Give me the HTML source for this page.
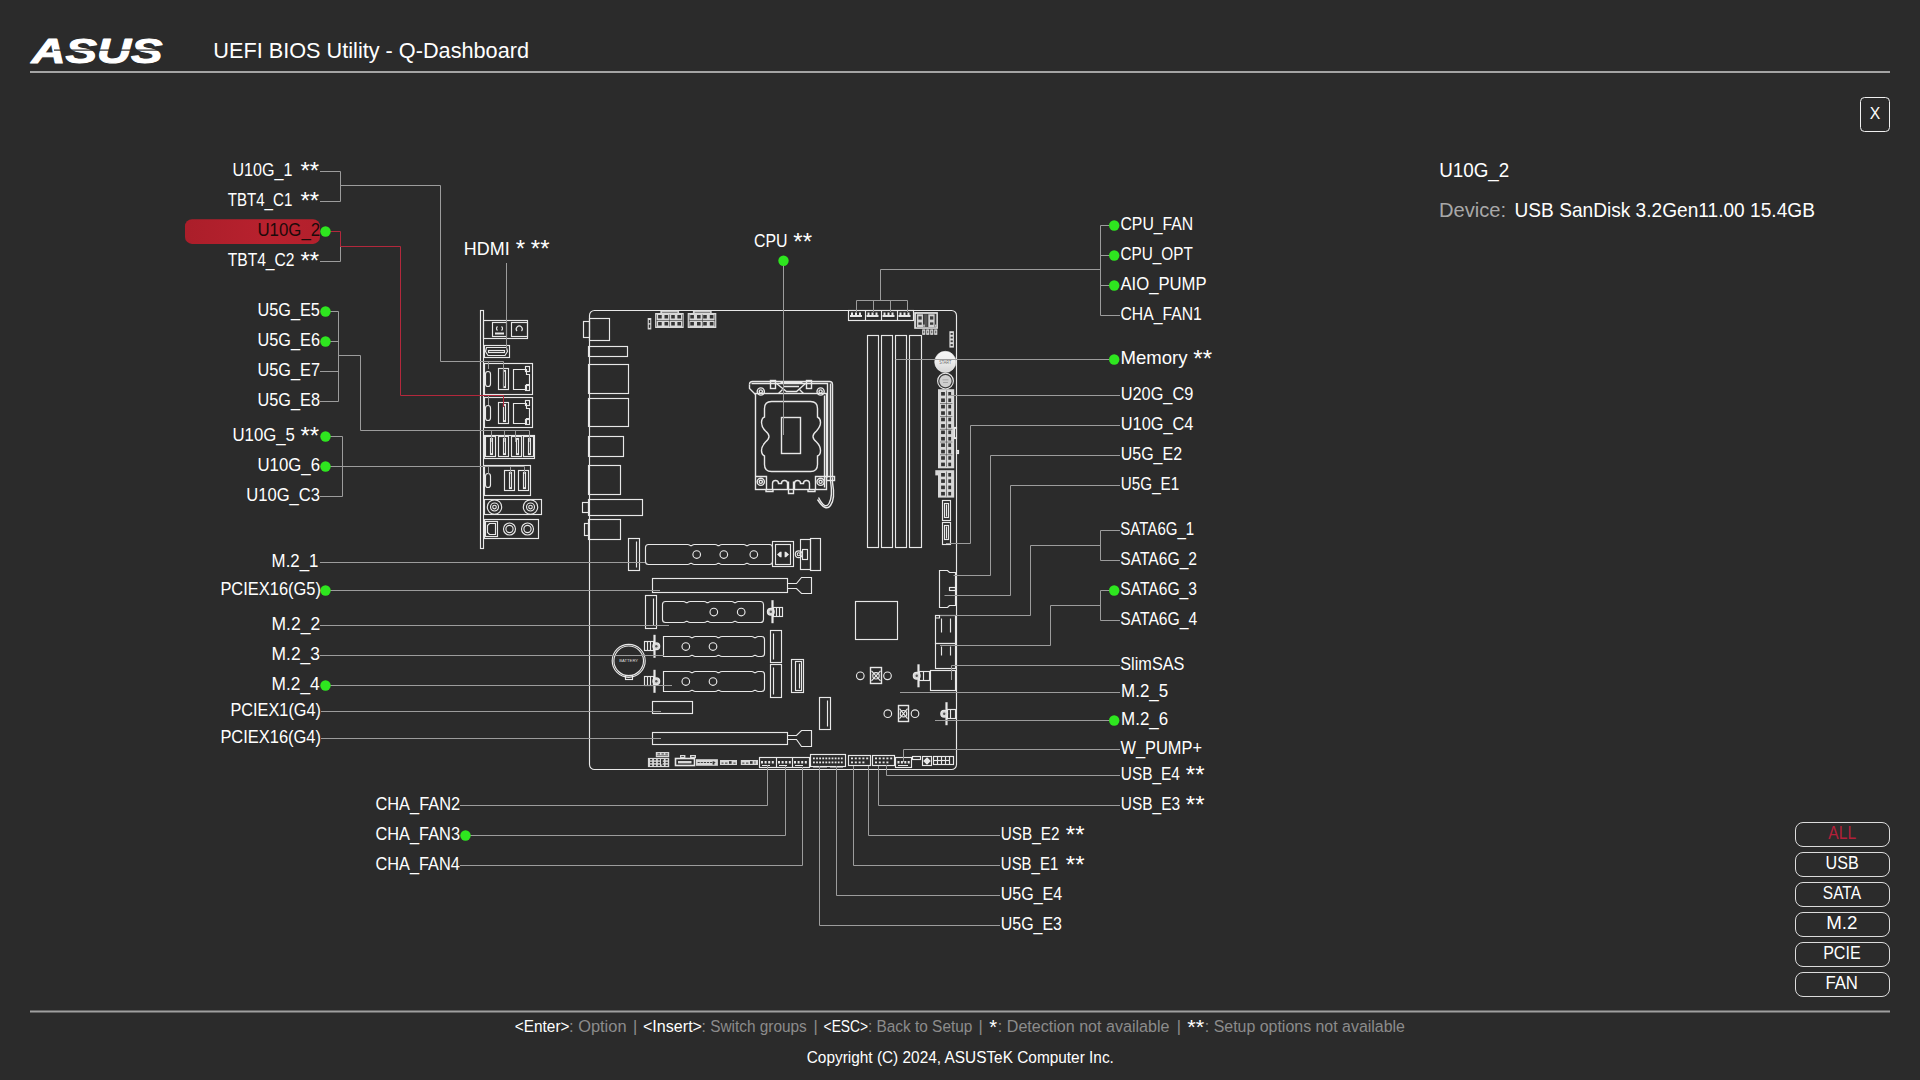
<!DOCTYPE html>
<html lang="en"><head><meta charset="utf-8"><title>UEFI BIOS Utility - Q-Dashboard</title>
<style>
html,body{margin:0;padding:0;background:#2b2b2b;overflow:hidden}
body{width:1920px;height:1080px}
svg{display:block;position:absolute;left:0;top:0}
text{font-family:"Liberation Sans", sans-serif;white-space:pre}
.o{fill:none;stroke:#e8e8e8;stroke-width:1.15}
.l{fill:none;stroke:#9c9c9c;stroke-width:1}
.r{fill:none;stroke:#b3283c;stroke-width:1}
.g{fill:#2ee61f;stroke:none}
</style></head><body>
<svg width="1920" height="1080" viewBox="0 0 1920 1080">
<rect x="0" y="0" width="1920" height="1080" fill="#2b2b2b"/>
<g id="header">
<text x="31.5" y="63" font-size="34.5" font-weight="bold" font-style="italic" fill="#fff" stroke="#fff" stroke-width="1" stroke-linejoin="round" textLength="131" lengthAdjust="spacingAndGlyphs">ASUS</text>
<rect x="54" y="49.5" width="109" height="1.2" fill="#2b2b2b" stroke="none"/>
<text x="213.33" y="57.8" font-size="21.6" text-anchor="start" fill="#fff" textLength="315.66" lengthAdjust="spacingAndGlyphs">UEFI BIOS Utility - Q-Dashboard</text>
<rect x="30" y="71" width="1860" height="2" fill="#a4a4a4" stroke="none"/>
</g>
<g id="footer">
<rect x="30" y="1010.5" width="1860" height="2" fill="#a0a0a0" stroke="none"/>
<text x="514.75" y="1032" font-size="16.3" text-anchor="start" fill="#fff" textLength="54.74" lengthAdjust="spacingAndGlyphs">&lt;Enter&gt;</text>
<text x="569" y="1032" font-size="16.3" text-anchor="start" fill="#8c8c8c" textLength="57.55" lengthAdjust="spacingAndGlyphs">: Option</text>
<text x="635" y="1032" font-size="16.3" text-anchor="middle" fill="#8c8c8c">|</text>
<text x="642.96" y="1032" font-size="16.3" text-anchor="start" fill="#fff" textLength="59.06" lengthAdjust="spacingAndGlyphs">&lt;Insert&gt;</text>
<text x="701.6" y="1032" font-size="16.3" text-anchor="start" fill="#8c8c8c" textLength="105.21" lengthAdjust="spacingAndGlyphs">: Switch groups</text>
<text x="815.5" y="1032" font-size="16.3" text-anchor="middle" fill="#8c8c8c">|</text>
<text x="823.57" y="1032" font-size="16.3" text-anchor="start" fill="#fff" textLength="44.59" lengthAdjust="spacingAndGlyphs">&lt;ESC&gt;</text>
<text x="867.9" y="1032" font-size="16.3" text-anchor="start" fill="#8c8c8c" textLength="104.48" lengthAdjust="spacingAndGlyphs">: Back to Setup</text>
<text x="980.5" y="1032" font-size="16.3" text-anchor="middle" fill="#8c8c8c">|</text>
<text x="997.84" y="1032" font-size="16.3" text-anchor="start" fill="#8c8c8c" textLength="171.63" lengthAdjust="spacingAndGlyphs">: Detection not available</text>
<text x="1178.8" y="1032" font-size="16.3" text-anchor="middle" fill="#8c8c8c">|</text>
<text x="1204.85" y="1032" font-size="16.3" text-anchor="start" fill="#8c8c8c" textLength="200.11" lengthAdjust="spacingAndGlyphs">: Setup options not available</text>
<text x="989.18" y="1033.9" font-size="20.2" text-anchor="start" fill="#fff">*</text>
<text x="1187.18" y="1033.9" font-size="20.2" text-anchor="start" fill="#fff" textLength="16.92" lengthAdjust="spacingAndGlyphs">**</text>
<text x="806.73" y="1062.5" font-size="16.3" text-anchor="start" fill="#fff" textLength="307.17" lengthAdjust="spacingAndGlyphs">Copyright (C) 2024, ASUSTeK Computer Inc.</text>
</g>
<g id="panel">
<rect x="1860.5" y="97.5" width="29" height="34" rx="4" fill="none" stroke="#f0f0f0" stroke-width="1"/>
<text x="1875" y="119" font-size="17" text-anchor="middle" fill="#fff" textLength="10.5" lengthAdjust="spacingAndGlyphs">X</text>
<text x="1439.15" y="177" font-size="20.3" text-anchor="start" fill="#fff" textLength="70.1" lengthAdjust="spacingAndGlyphs">U10G_2</text>
<text x="1438.95" y="217" font-size="20.3" text-anchor="start" fill="#a8a8a8" textLength="67.17" lengthAdjust="spacingAndGlyphs">Device:</text>
<text x="1514.53" y="217" font-size="20.3" text-anchor="start" fill="#fff" textLength="300.37" lengthAdjust="spacingAndGlyphs">USB SanDisk 3.2Gen11.00 15.4GB</text>
<rect x="1795.5" y="822.5" width="94" height="24" rx="7.5" fill="none" stroke="#dcdcdc" stroke-width="1"/>
<text x="1828.37" y="838.9" font-size="18.4" text-anchor="start" fill="#b3203a" textLength="27.75" lengthAdjust="spacingAndGlyphs">ALL</text>
<rect x="1795.5" y="852.5" width="94" height="24" rx="7.5" fill="none" stroke="#dcdcdc" stroke-width="1"/>
<text x="1825.56" y="868.9" font-size="18.4" text-anchor="start" fill="#fff" textLength="33.18" lengthAdjust="spacingAndGlyphs">USB</text>
<rect x="1795.5" y="882.5" width="94" height="24" rx="7.5" fill="none" stroke="#dcdcdc" stroke-width="1"/>
<text x="1822.8" y="898.9" font-size="18.4" text-anchor="start" fill="#fff" textLength="38.24" lengthAdjust="spacingAndGlyphs">SATA</text>
<rect x="1795.5" y="912.5" width="94" height="24" rx="7.5" fill="none" stroke="#dcdcdc" stroke-width="1"/>
<text x="1826.26" y="928.9" font-size="18.4" text-anchor="start" fill="#fff" textLength="31.28" lengthAdjust="spacingAndGlyphs">M.2</text>
<rect x="1795.5" y="942.5" width="94" height="24" rx="7.5" fill="none" stroke="#dcdcdc" stroke-width="1"/>
<text x="1823.19" y="958.9" font-size="18.4" text-anchor="start" fill="#fff" textLength="37.39" lengthAdjust="spacingAndGlyphs">PCIE</text>
<rect x="1795.5" y="972.5" width="94" height="24" rx="7.5" fill="none" stroke="#dcdcdc" stroke-width="1"/>
<text x="1825.43" y="988.9" font-size="18.4" text-anchor="start" fill="#fff" textLength="32.52" lengthAdjust="spacingAndGlyphs">FAN</text>
</g>
<g id="board" class="o">
<rect x="589.5" y="310.5" width="367" height="459" rx="5"/>
<rect x="480.5" y="310.5" width="3" height="238"/>
<rect x="483.5" y="320.5" width="44" height="18"/>
<rect x="492.5" y="322.5" width="14" height="14"/>
<rect x="511.5" y="322.5" width="16" height="14"/>
<path d="M497.5 330.5a2.5 2.5 0 0 1 0-4M501.5 326.5a2.5 2.5 0 0 1 0 4"/>
<rect x="495" y="332.5" width="9" height="2" fill="#e8e8e8" stroke="none"/>
<path d="M517 331a3 3 0 1 1 4.5 0"/>
<rect x="484.5" y="345.5" width="25" height="12"/>
<path d="M486.5 347.5H506.5L507.5 351.5L505 355.5H488L485.5 351.5Z"/>
<rect x="488.5" y="350.5" width="16" height="2"/>
<rect x="484.5" y="363.5" width="48" height="31"/>
<rect x="485.5" y="371.5" width="5" height="15" rx="2.5"/>
<rect x="498.5" y="368.5" width="10" height="21"/>
<rect x="503.5" y="370.5" width="2" height="17"/>
<path d="M513.5 369.5 H526.5 V374.5 H529.5 V384.5 H526.5 V389.5 H513.5 Z"/>
<rect x="525.5" y="366.5" width="4" height="5"/>
<rect x="525.5" y="385.5" width="4" height="5"/>
<rect x="484.5" y="397.5" width="48" height="30"/>
<rect x="485.5" y="405.5" width="5" height="15" rx="2.5"/>
<rect x="498.5" y="402.5" width="10" height="21"/>
<rect x="503.5" y="404.5" width="2" height="17"/>
<path d="M513.5 403.5 H526.5 V408.5 H529.5 V418.5 H526.5 V423.5 H513.5 Z"/>
<rect x="525.5" y="400.5" width="4" height="5"/>
<rect x="525.5" y="419.5" width="4" height="5"/>
<rect x="484.5" y="435.5" width="50" height="23"/>
<rect x="485.5" y="436.5" width="10" height="20"/>
<rect x="490.5" y="438.5" width="2" height="16"/>
<rect x="498.5" y="436.5" width="10" height="20"/>
<rect x="503.5" y="438.5" width="2" height="16"/>
<rect x="511.5" y="436.5" width="10" height="20"/>
<rect x="516.5" y="438.5" width="2" height="16"/>
<rect x="523.5" y="436.5" width="10" height="20"/>
<rect x="528.5" y="438.5" width="2" height="16"/>
<rect x="484.5" y="465.5" width="46" height="30"/>
<rect x="485.5" y="473.5" width="5" height="14" rx="2.5"/>
<rect x="504.5" y="470.5" width="10" height="20"/>
<rect x="509.5" y="472.5" width="2" height="16"/>
<rect x="518.5" y="470.5" width="10" height="20"/>
<rect x="523.5" y="472.5" width="2" height="16"/>
<rect x="484.5" y="499.5" width="57" height="15"/>
<circle cx="494.5" cy="507" r="7.2"/>
<circle cx="494.5" cy="507" r="4"/>
<circle cx="494.5" cy="507" r="1.8"/>
<circle cx="530.5" cy="507" r="7.2"/>
<circle cx="530.5" cy="507" r="4"/>
<circle cx="530.5" cy="507" r="1.8"/>
<rect x="484.5" y="519.5" width="54" height="19"/>
<rect x="485.5" y="521.5" width="12" height="15"/>
<path d="M487.5 525.5L489.5 523.5H495.5V534.5H489.5L487.5 532.5Z"/>
<circle cx="509.5" cy="529" r="6"/>
<circle cx="509.5" cy="529" r="3.6"/>
<circle cx="527.5" cy="529" r="6"/>
<circle cx="527.5" cy="529" r="3.6"/>
<rect x="589.5" y="318.5" width="20" height="22"/>
<rect x="583.5" y="321.5" width="6" height="16"/>
<rect x="588.5" y="346.5" width="39" height="10"/>
<rect x="588.5" y="364.5" width="40" height="29"/>
<rect x="588.5" y="398.5" width="40" height="28"/>
<rect x="588.5" y="436.5" width="35" height="20"/>
<rect x="588.5" y="465.5" width="32" height="29"/>
<rect x="588.5" y="499.5" width="54" height="16"/>
<rect x="582.5" y="502.5" width="6" height="10"/>
<rect x="588.5" y="519.5" width="32" height="20"/>
<rect x="584.5" y="523.5" width="4" height="12"/>
<rect x="647.7" y="318" width="3.6" height="11.5" fill="#d8d8d8" stroke="none"/>
<rect x="648.8" y="320" width="1.4" height="3.2" fill="#343434" stroke="none"/>
<rect x="648.8" y="324.6" width="1.4" height="3.2" fill="#343434" stroke="none"/>
<rect x="655.1" y="313" width="28.6" height="15" fill="#d8d8d8" stroke="none"/>
<rect x="660.3" y="310.8" width="18.8" height="2.2" fill="#d8d8d8" stroke="none"/>
<rect x="662.1" y="311.9" width="15.4" height="0.6" fill="#343434" stroke="none"/>
<rect x="658.1" y="315" width="3.6" height="3.5" fill="#343434" stroke="none"/>
<rect x="658.1" y="322" width="3.6" height="3.5" fill="#343434" stroke="none"/>
<rect x="664.5" y="315" width="3.6" height="3.5" fill="#343434" stroke="none"/>
<rect x="664.5" y="322" width="3.6" height="3.5" fill="#343434" stroke="none"/>
<rect x="671.2" y="315" width="3.6" height="3.5" fill="#343434" stroke="none"/>
<rect x="671.2" y="322" width="3.6" height="3.5" fill="#343434" stroke="none"/>
<rect x="677.4" y="315" width="3.6" height="3.5" fill="#343434" stroke="none"/>
<rect x="677.4" y="322" width="3.6" height="3.5" fill="#343434" stroke="none"/>
<rect x="656.3" y="320" width="26.2" height="0.6" fill="#343434" stroke="none"/>
<rect x="669.4" y="314.5" width="0.5" height="12" fill="#343434" stroke="none"/>
<rect x="656.3" y="314.5" width="0.5" height="12" fill="#343434" stroke="none"/>
<rect x="682" y="314.5" width="0.5" height="12" fill="#343434" stroke="none"/>
<rect x="687.7" y="313" width="28.6" height="15" fill="#d8d8d8" stroke="none"/>
<rect x="692.9" y="310.8" width="18.8" height="2.2" fill="#d8d8d8" stroke="none"/>
<rect x="694.7" y="311.9" width="15.4" height="0.6" fill="#343434" stroke="none"/>
<rect x="690.3" y="315" width="3.6" height="3.5" fill="#343434" stroke="none"/>
<rect x="690.3" y="322" width="3.6" height="3.5" fill="#343434" stroke="none"/>
<rect x="697" y="315" width="3.6" height="3.5" fill="#343434" stroke="none"/>
<rect x="697" y="322" width="3.6" height="3.5" fill="#343434" stroke="none"/>
<rect x="703.2" y="315" width="3.6" height="3.5" fill="#343434" stroke="none"/>
<rect x="703.2" y="322" width="3.6" height="3.5" fill="#343434" stroke="none"/>
<rect x="709.8" y="315" width="3.6" height="3.5" fill="#343434" stroke="none"/>
<rect x="709.8" y="322" width="3.6" height="3.5" fill="#343434" stroke="none"/>
<rect x="688.9" y="320" width="26.2" height="0.6" fill="#343434" stroke="none"/>
<rect x="702" y="314.5" width="0.5" height="12" fill="#343434" stroke="none"/>
<rect x="688.9" y="314.5" width="0.5" height="12" fill="#343434" stroke="none"/>
<rect x="714.6" y="314.5" width="0.5" height="12" fill="#343434" stroke="none"/>
<rect x="848.5" y="310.5" width="65" height="10"/>
<path d="M865.5 310.5V320.5"/>
<path d="M881.5 310.5V320.5"/>
<path d="M897.5 310.5V320.5"/>
<rect x="850" y="315" width="12" height="2" fill="#e8e8e8" stroke="none"/>
<rect x="851" y="312.5" width="2" height="2.5" fill="#e8e8e8" stroke="none"/>
<rect x="855" y="312.5" width="2" height="2.5" fill="#e8e8e8" stroke="none"/>
<rect x="859" y="312.5" width="2" height="2.5" fill="#e8e8e8" stroke="none"/>
<rect x="866.5" y="315" width="12" height="2" fill="#e8e8e8" stroke="none"/>
<rect x="867.5" y="312.5" width="2" height="2.5" fill="#e8e8e8" stroke="none"/>
<rect x="871.5" y="312.5" width="2" height="2.5" fill="#e8e8e8" stroke="none"/>
<rect x="875.5" y="312.5" width="2" height="2.5" fill="#e8e8e8" stroke="none"/>
<rect x="882.5" y="315" width="12" height="2" fill="#e8e8e8" stroke="none"/>
<rect x="883.5" y="312.5" width="2" height="2.5" fill="#e8e8e8" stroke="none"/>
<rect x="887.5" y="312.5" width="2" height="2.5" fill="#e8e8e8" stroke="none"/>
<rect x="891.5" y="312.5" width="2" height="2.5" fill="#e8e8e8" stroke="none"/>
<rect x="898.5" y="315" width="12" height="2" fill="#e8e8e8" stroke="none"/>
<rect x="899.5" y="312.5" width="2" height="2.5" fill="#e8e8e8" stroke="none"/>
<rect x="903.5" y="312.5" width="2" height="2.5" fill="#e8e8e8" stroke="none"/>
<rect x="907.5" y="312.5" width="2" height="2.5" fill="#e8e8e8" stroke="none"/>
<rect x="914.2" y="312.1" width="23.7" height="16.7" fill="#e6e6e6" stroke="none"/>
<rect x="915.9" y="313.8" width="20.5" height="13.5" fill="#3a3a3a" stroke="none"/>
<rect x="916.9" y="314.3" width="6.1" height="12.7" fill="#d2d2d2" stroke="none"/>
<rect x="928.3" y="314.3" width="6.3" height="12.7" fill="#d2d2d2" stroke="none"/>
<rect x="918.4" y="316.3" width="3.3" height="3.3" fill="#3e3e3e" stroke="none"/>
<rect x="918.4" y="322.4" width="3.3" height="2.4" fill="#3e3e3e" stroke="none"/>
<rect x="930" y="316.3" width="3.3" height="3.3" fill="#3e3e3e" stroke="none"/>
<rect x="930" y="322.4" width="3.3" height="2.4" fill="#3e3e3e" stroke="none"/>
<rect x="924.2" y="314.3" width="3.2" height="12.7" fill="#555" stroke="none"/>
<rect x="923.4" y="324.6" width="1.2" height="2.2" fill="#eee" stroke="none"/>
<rect x="935.2" y="324.6" width="1" height="2.2" fill="#eee" stroke="none"/>
<rect x="922.2" y="329.4" width="3.1" height="5.4" fill="#e2e2e2" stroke="none"/>
<rect x="923.2" y="330.6" width="1.1" height="2.8" fill="#555" stroke="none"/>
<rect x="926.2" y="329.4" width="3.1" height="5.4" fill="#e2e2e2" stroke="none"/>
<rect x="927.2" y="330.6" width="1.1" height="2.8" fill="#555" stroke="none"/>
<rect x="930.2" y="329.4" width="3.1" height="5.4" fill="#e2e2e2" stroke="none"/>
<rect x="931.2" y="330.6" width="1.1" height="2.8" fill="#555" stroke="none"/>
<rect x="934.2" y="329.4" width="3.1" height="5.4" fill="#e2e2e2" stroke="none"/>
<rect x="935.2" y="330.6" width="1.1" height="2.8" fill="#555" stroke="none"/>
<rect x="949.4" y="331.2" width="4.5" height="16.4" fill="#dcdcdc" stroke="none"/>
<rect x="950.6" y="333" width="2.2" height="1.8" fill="#3a3a3a" stroke="none"/>
<rect x="950.6" y="336.7" width="2.2" height="1.8" fill="#3a3a3a" stroke="none"/>
<rect x="950.6" y="340.4" width="2.2" height="1.8" fill="#3a3a3a" stroke="none"/>
<rect x="950.6" y="344.1" width="2.2" height="1.8" fill="#3a3a3a" stroke="none"/>
<rect x="867.5" y="335.5" width="11" height="212"/>
<rect x="881.5" y="335.5" width="11" height="212"/>
<rect x="895.5" y="335.5" width="11" height="212"/>
<rect x="909.5" y="335.5" width="12" height="212"/>
<defs><linearGradient id="gb" x1="0" y1="0" x2="0" y2="1"><stop offset="0" stop-color="#f6f6f6"/><stop offset="0.45" stop-color="#eeeeee"/><stop offset="1" stop-color="#d4d4d4"/></linearGradient></defs>
<circle cx="945.3" cy="361.9" r="10.6" fill="url(#gb)" stroke="#f0f0f0" stroke-width="0.6"/>
<text x="945.3" y="364.2" font-size="4.6" text-anchor="middle" fill="#666" stroke="none" textLength="12" lengthAdjust="spacingAndGlyphs">START</text>
<circle cx="945.5" cy="381.1" r="7.9" fill="#3a3a3a" stroke="#e8e8e8" stroke-width="1.1"/>
<circle cx="945.5" cy="381.1" r="6.1" fill="#cfcfcf" stroke="none"/>
<rect x="942.5" y="379.6" width="6" height="0.6" fill="#8a8a8a" stroke="none"/>
<rect x="943" y="382" width="5" height="0.6" fill="#8a8a8a" stroke="none"/>
<rect x="938" y="389.2" width="16.2" height="79.1" fill="#d8d8d8" stroke="none"/>
<rect x="941.1" y="392" width="3.8" height="3.6" fill="#343434" stroke="none"/>
<rect x="948.3" y="392" width="2.8" height="3.6" fill="#343434" stroke="none"/>
<rect x="941.1" y="398.42" width="3.8" height="3.6" fill="#343434" stroke="none"/>
<rect x="948.3" y="398.42" width="2.8" height="3.6" fill="#343434" stroke="none"/>
<rect x="941.1" y="404.84" width="3.8" height="3.6" fill="#343434" stroke="none"/>
<rect x="948.3" y="404.84" width="2.8" height="3.6" fill="#343434" stroke="none"/>
<rect x="941.1" y="411.26" width="3.8" height="3.6" fill="#343434" stroke="none"/>
<rect x="948.3" y="411.26" width="2.8" height="3.6" fill="#343434" stroke="none"/>
<rect x="941.1" y="417.68" width="3.8" height="3.6" fill="#343434" stroke="none"/>
<rect x="948.3" y="417.68" width="2.8" height="3.6" fill="#343434" stroke="none"/>
<rect x="941.1" y="424.1" width="3.8" height="3.6" fill="#343434" stroke="none"/>
<rect x="948.3" y="424.1" width="2.8" height="3.6" fill="#343434" stroke="none"/>
<rect x="941.1" y="430.52" width="3.8" height="3.6" fill="#343434" stroke="none"/>
<rect x="948.3" y="430.52" width="2.8" height="3.6" fill="#343434" stroke="none"/>
<rect x="941.1" y="436.94" width="3.8" height="3.6" fill="#343434" stroke="none"/>
<rect x="948.3" y="436.94" width="2.8" height="3.6" fill="#343434" stroke="none"/>
<rect x="941.1" y="443.36" width="3.8" height="3.6" fill="#343434" stroke="none"/>
<rect x="948.3" y="443.36" width="2.8" height="3.6" fill="#343434" stroke="none"/>
<rect x="941.1" y="449.78" width="3.8" height="3.6" fill="#343434" stroke="none"/>
<rect x="948.3" y="449.78" width="2.8" height="3.6" fill="#343434" stroke="none"/>
<rect x="941.1" y="456.2" width="3.8" height="3.6" fill="#343434" stroke="none"/>
<rect x="948.3" y="456.2" width="2.8" height="3.6" fill="#343434" stroke="none"/>
<rect x="941.1" y="462.62" width="3.8" height="3.6" fill="#343434" stroke="none"/>
<rect x="948.3" y="462.62" width="2.8" height="3.6" fill="#343434" stroke="none"/>
<rect x="940" y="403.24" width="12.4" height="0.5" fill="#343434" stroke="none"/>
<rect x="940" y="416.08" width="12.4" height="0.5" fill="#343434" stroke="none"/>
<rect x="940" y="428.92" width="12.4" height="0.5" fill="#343434" stroke="none"/>
<rect x="940" y="441.76" width="12.4" height="0.5" fill="#343434" stroke="none"/>
<rect x="940" y="454.6" width="12.4" height="0.5" fill="#343434" stroke="none"/>
<rect x="946.4" y="390.5" width="0.5" height="76.5" fill="#343434" stroke="none"/>
<rect x="938" y="470.2" width="16.2" height="27.4" fill="#d8d8d8" stroke="none"/>
<rect x="935.3" y="470.2" width="2.7" height="5.2" fill="#d8d8d8" stroke="none"/>
<rect x="941.1" y="473" width="3.8" height="3.6" fill="#343434" stroke="none"/>
<rect x="948.3" y="473" width="2.8" height="3.6" fill="#343434" stroke="none"/>
<rect x="941.1" y="479.3" width="3.8" height="3.6" fill="#343434" stroke="none"/>
<rect x="948.3" y="479.3" width="2.8" height="3.6" fill="#343434" stroke="none"/>
<rect x="941.1" y="485.6" width="3.8" height="3.6" fill="#343434" stroke="none"/>
<rect x="948.3" y="485.6" width="2.8" height="3.6" fill="#343434" stroke="none"/>
<rect x="941.1" y="491.9" width="3.8" height="3.6" fill="#343434" stroke="none"/>
<rect x="948.3" y="491.9" width="2.8" height="3.6" fill="#343434" stroke="none"/>
<rect x="946.4" y="471.5" width="0.5" height="25" fill="#343434" stroke="none"/>
<rect x="954.5" y="427.5" width="2" height="11"/>
<rect x="956.5" y="450.5" width="2" height="3"/>
<rect x="942.5" y="500.5" width="8" height="20"/>
<rect x="944.5" y="503.5" width="4" height="14"/>
<path d="M946.5 504.5V516.5"/>
<rect x="942.5" y="522.5" width="8" height="22"/>
<rect x="944.5" y="525.5" width="4" height="14"/>
<path d="M946.5 526.5V538.5"/>
<g stroke-width="1.4">
<path d="M749.5 384.5Q749.5 381.5 752.5 381.5H829.5Q832.5 381.5 832.5 384.5V477.5"/>
<path d="M751.5 383.5H827.5V477.5M749.5 384.5V388.5L755.5 394.5"/>
<rect x="755.5" y="393.5" width="71" height="96"/>
<path d="M824.5 395.5V487.5"/>
<path d="M771.5 401.5H810.5Q817.5 401.5 817.5 408.5V417Q820.5 418.5 820.5 422.5T816.5 431Q813 434 813 436.5T816.5 442Q820.5 446 820.5 450.5T817.5 456V464.5Q817.5 471.5 810.5 471.5H771.5Q764.5 471.5 764.5 464.5V456Q761.5 454.5 761.5 450.5T765.5 442Q769 439 769 436.5T765.5 431Q761.5 427 761.5 422.5T764.5 417V408.5Q764.5 401.5 771.5 401.5Z"/>
<rect x="781.5" y="417.5" width="19" height="36"/>
<circle cx="760.8" cy="391.5" r="3.6"/>
<circle cx="760.8" cy="391.5" r="1.6"/>
<circle cx="820.6" cy="391.5" r="3.6"/>
<circle cx="820.6" cy="391.5" r="1.6"/>
<circle cx="760.8" cy="481.8" r="3.6"/>
<circle cx="760.8" cy="481.8" r="1.6"/>
<circle cx="820.6" cy="481.8" r="3.6"/>
<circle cx="820.6" cy="481.8" r="1.6"/>
<rect x="770.5" y="380.5" width="5" height="8"/>
<rect x="806.5" y="380.5" width="5" height="8"/>
<path d="M776.5 383.5L786.5 391.5H796.5L805.5 383.5M780.5 382.5H802.5M783 386.5H799"/>
<path d="M778.5 393.5L782.5 389.5M803.5 393.5L799.5 389.5"/>
<path d="M772.5 489.5V483.5Q772.5 480.5 775.5 480.5T778.5 483.5H781.5Q781.5 480.5 784.5 480.5T787.5 483.5V489.5M794.5 489.5V483.5Q794.5 480.5 797.5 480.5T800.5 483.5H803.5Q803.5 480.5 806.5 480.5T809.5 483.5V489.5"/>
<path d="M788.5 481.5V493.5H793.5V481.5"/>
<path d="M766 489.5V491.5H773V489.5M808 489.5V491.5H815V489.5"/>
<path d="M830.5 383.5V480.5Q833 497 829 503.5T818.5 497.5"/>
<path d="M832.5 477.5V482.5Q835.5 499 830.5 505.5T817.5 499.5"/>
<rect x="826.5" y="476.5" width="8" height="4"/>
<path d="M755.5 476.5H766.5V489.5M826.5 476.5H815.5V489.5"/>
</g>
<rect x="628.5" y="538.5" width="11" height="32"/>
<path d="M636.5 541.5V567.5"/>
<path d="M648.5 544.5H687.5q1.5 0 2.5 0.9q1 0.5 2 0q1 -0.9 2.5 -0.9H715q1.5 0 2.5 0.9q1 0.5 2 0q1 -0.9 2.5 -0.9H743.5q1.5 0 2.5 0.9q1 0.5 2 0q1 -0.9 2.5 -0.9H769.5Q772.5 544.5 772.5 547.5V561.5Q772.5 564.5 769.5 564.5H750.5q-1.5 0 -2.5 -0.9q-1 -0.5 -2 0q-1 0.9 -2.5 0.9H722q-1.5 0 -2.5 -0.9q-1 -0.5 -2 0q-1 0.9 -2.5 0.9H694.5q-1.5 0 -2.5 -0.9q-1 -0.5 -2 0q-1 0.9 -2.5 0.9H648.5Q645.5 564.5 645.5 561.5V547.5Q645.5 544.5 648.5 544.5Z"/>
<circle cx="696.7" cy="554.5" r="3.8"/>
<circle cx="723.8" cy="554.5" r="3.8"/>
<circle cx="753.8" cy="554.5" r="3.8"/>
<rect x="772.5" y="541.5" width="21" height="25"/>
<rect x="775.5" y="544.5" width="15" height="20"/>
<path d="M777 554.5L780 551.8H781.6V557.2H780ZM789 554.5L786 551.8H784.6V557.2H786Z" fill="#e8e8e8" stroke="none"/>
<circle cx="798.7" cy="554.2" r="3.4"/>
<circle cx="798.7" cy="554.2" r="1.5"/>
<rect x="800.5" y="539.5" width="10" height="30"/>
<rect x="810.5" y="538.5" width="10" height="32"/>
<rect x="802.5" y="549.5" width="5" height="10"/>
<rect x="652.5" y="578.5" width="135" height="14"/>
<path d="M787.5 583.5H796.5L801.5 577.5H811.5V593.5H801.5L796.5 588.5H787.5"/>
<rect x="652.5" y="732.5" width="135" height="12"/>
<path d="M787.5 735.5H796.5L801.5 730.5H811.5V746.5H801.5L796.5 739.5H787.5"/>
<rect x="652.5" y="701.5" width="40" height="12"/>
<rect x="645.5" y="595.5" width="11" height="33"/>
<path d="M653.5 598.5V625.5"/>
<path d="M665.5 601.5H683.2q1.5 0 2.5 0.9q1 0.5 2 0q1 -0.9 2.5 -0.9H704q1.5 0 2.5 0.9q1 0.5 2 0q1 -0.9 2.5 -0.9H731.5q1.5 0 2.5 0.9q1 0.5 2 0q1 -0.9 2.5 -0.9H760.5Q763.5 601.5 763.5 604.5V619.5Q763.5 622.5 760.5 622.5H738.5q-1.5 0 -2.5 -0.9q-1 -0.5 -2 0q-1 0.9 -2.5 0.9H711q-1.5 0 -2.5 -0.9q-1 -0.5 -2 0q-1 0.9 -2.5 0.9H690.2q-1.5 0 -2.5 -0.9q-1 -0.5 -2 0q-1 0.9 -2.5 0.9H665.5Q662.5 622.5 662.5 619.5V604.5Q662.5 601.5 665.5 601.5Z"/>
<circle cx="713.8" cy="612" r="3.8"/>
<circle cx="741.2" cy="612" r="3.8"/>
<path d="M772.5 600.2V623.2" stroke-width="2.2"/>
<circle cx="770.8" cy="611.7" r="3.4" fill="#d6d6d6"/>
<circle cx="770.8" cy="611.7" r="1.2" fill="#555" stroke="none"/>
<rect x="773.5" y="607.5" width="9" height="9"/>
<path d="M776.5 607.5V616.5M779.5 607.5V616.5"/>
<path d="M663.5 636.5H688.5q1.5 0 2.5 0.9q1 0.5 2 0q1 -0.9 2.5 -0.9H715q1.5 0 2.5 0.9q1 0.5 2 0q1 -0.9 2.5 -0.9H751.5q1.5 0 2.5 0.9q1 0.5 2 0q1 -0.9 2.5 -0.9H761.5Q764.5 636.5 764.5 639.5V653.5Q764.5 656.5 761.5 656.5H758.5q-1.5 0 -2.5 -0.9q-1 -0.5 -2 0q-1 0.9 -2.5 0.9H722q-1.5 0 -2.5 -0.9q-1 -0.5 -2 0q-1 0.9 -2.5 0.9H695.5q-1.5 0 -2.5 -0.9q-1 -0.5 -2 0q-1 0.9 -2.5 0.9H663.5Z"/>
<circle cx="685.8" cy="646.5" r="3.8"/>
<circle cx="713" cy="646.5" r="3.8"/>
<path d="M663.5 671.5H688.5q1.5 0 2.5 0.9q1 0.5 2 0q1 -0.9 2.5 -0.9H715q1.5 0 2.5 0.9q1 0.5 2 0q1 -0.9 2.5 -0.9H751.5q1.5 0 2.5 0.9q1 0.5 2 0q1 -0.9 2.5 -0.9H761.5Q764.5 671.5 764.5 674.5V688.5Q764.5 691.5 761.5 691.5H758.5q-1.5 0 -2.5 -0.9q-1 -0.5 -2 0q-1 0.9 -2.5 0.9H722q-1.5 0 -2.5 -0.9q-1 -0.5 -2 0q-1 0.9 -2.5 0.9H695.5q-1.5 0 -2.5 -0.9q-1 -0.5 -2 0q-1 0.9 -2.5 0.9H663.5Z"/>
<circle cx="685.8" cy="681.5" r="3.8"/>
<circle cx="713" cy="681.5" r="3.8"/>
<path d="M654.5 634.8V657.8" stroke-width="2.2"/>
<circle cx="656.3" cy="646.3" r="3.4" fill="#d6d6d6"/>
<circle cx="656.3" cy="646.3" r="1.2" fill="#555" stroke="none"/>
<rect x="644.5" y="641.5" width="9" height="9"/>
<path d="M650.5 641.5V650.5M647.5 641.5V650.5"/>
<path d="M654.5 669.8V692.8" stroke-width="2.2"/>
<circle cx="656.3" cy="681.3" r="3.4" fill="#d6d6d6"/>
<circle cx="656.3" cy="681.3" r="1.2" fill="#555" stroke="none"/>
<rect x="644.5" y="676.5" width="9" height="9"/>
<path d="M650.5 676.5V685.5M647.5 676.5V685.5"/>
<rect x="770.5" y="630.5" width="11" height="32"/>
<path d="M773.5 633.5V659.5"/>
<rect x="770.5" y="664.5" width="11" height="33"/>
<path d="M773.5 667.5V694.5"/>
<rect x="791.5" y="659.5" width="12" height="33"/>
<rect x="795.5" y="661.5" width="6" height="29"/>
<path d="M799.5 663.5V688.5"/>
<rect x="819.5" y="697.5" width="11" height="32"/>
<path d="M827.5 700.5V726.5"/>
<circle cx="628.7" cy="660.8" r="16.5"/>
<circle cx="628.7" cy="660.8" r="14.8"/>
<rect x="625.5" y="675.5" width="7" height="4"/>
<text x="628.7" y="662.3" font-size="4.2" text-anchor="middle" fill="#ddd" stroke="none">BATTERY</text>
<rect x="855.5" y="601.5" width="42" height="38"/>
<circle cx="860.3" cy="675.8" r="3.8"/>
<circle cx="887.5" cy="675.8" r="3.8"/>
<rect x="870.5" y="667.5" width="11" height="16" stroke-width="1.4"/>
<circle cx="876" cy="675.8" r="3.2"/>
<path d="M871.5 670.8L880.5 680.8M880.5 670.8L871.5 680.8"/>
<circle cx="887.8" cy="713.7" r="3.8"/>
<circle cx="915" cy="713.7" r="3.8"/>
<rect x="898.5" y="705.5" width="10" height="16" stroke-width="1.4"/>
<circle cx="903.5" cy="713.7" r="3.2"/>
<path d="M899.5 708.7L907.5 718.7M907.5 708.7L899.5 718.7"/>
<path d="M918.5 664.3V687.3" stroke-width="2.2"/>
<circle cx="916.7" cy="675.8" r="3.4" fill="#d6d6d6"/>
<circle cx="916.7" cy="675.8" r="1.2" fill="#555" stroke="none"/>
<rect x="919.5" y="671.5" width="10" height="9"/>
<path d="M923.5 671.5V680.5"/>
<path d="M946.5 702.2V725.2" stroke-width="2.2"/>
<circle cx="944.2" cy="713.7" r="3.4" fill="#d6d6d6"/>
<circle cx="944.2" cy="713.7" r="1.2" fill="#555" stroke="none"/>
<rect x="947.5" y="709.5" width="8" height="9"/>
<path d="M950.5 709.5V718.5"/>
<path d="M939.5 570.5H947.5L949.5 572.5H955.5V605.5H949.5L947.5 607.5H939.5Z"/>
<rect x="949.5" y="587.5" width="6" height="3"/>
<rect x="935.5" y="615.5" width="20" height="28"/>
<rect x="935.5" y="643.5" width="20" height="25"/>
<path d="M941.5 618.5V632.5M950.5 618.5V632.5M935.5 615.5H939.5V618H935.5M941.5 646.5V655.5M950.5 646.5V655.5"/>
<rect x="930.5" y="670.5" width="25" height="20"/>
<rect x="647.9" y="757.9" width="21.3" height="9.2" fill="#d8d8d8" stroke="none"/>
<rect x="655.8" y="752" width="13.4" height="5.2" fill="#d8d8d8" stroke="none"/>
<rect x="650" y="759" width="2.2" height="1.4" fill="#343434" stroke="none"/>
<rect x="650" y="761.8" width="2.2" height="1.4" fill="#343434" stroke="none"/>
<rect x="650" y="764.6" width="2.2" height="1.4" fill="#343434" stroke="none"/>
<rect x="653.9" y="759" width="2.2" height="1.4" fill="#343434" stroke="none"/>
<rect x="653.9" y="761.8" width="2.2" height="1.4" fill="#343434" stroke="none"/>
<rect x="653.9" y="764.6" width="2.2" height="1.4" fill="#343434" stroke="none"/>
<rect x="657.8" y="759" width="2.2" height="1.4" fill="#343434" stroke="none"/>
<rect x="657.8" y="761.8" width="2.2" height="1.4" fill="#343434" stroke="none"/>
<rect x="657.8" y="764.6" width="2.2" height="1.4" fill="#343434" stroke="none"/>
<rect x="661.7" y="759" width="2.2" height="1.4" fill="#343434" stroke="none"/>
<rect x="661.7" y="761.8" width="2.2" height="1.4" fill="#343434" stroke="none"/>
<rect x="661.7" y="764.6" width="2.2" height="1.4" fill="#343434" stroke="none"/>
<rect x="665.6" y="759" width="2.2" height="1.4" fill="#343434" stroke="none"/>
<rect x="665.6" y="761.8" width="2.2" height="1.4" fill="#343434" stroke="none"/>
<rect x="665.6" y="764.6" width="2.2" height="1.4" fill="#343434" stroke="none"/>
<rect x="661" y="759" width="1.8" height="5.5" fill="#343434" stroke="none"/>
<rect x="657.5" y="753.4" width="2.5" height="1" fill="#343434" stroke="none"/>
<rect x="661.4" y="753.4" width="2.5" height="1" fill="#343434" stroke="none"/>
<rect x="665.3" y="753.4" width="2.5" height="1" fill="#343434" stroke="none"/>
<rect x="656.8" y="755.4" width="11.2" height="0.5" fill="#343434" stroke="none"/>
<rect x="675.5" y="758.5" width="19" height="7" stroke-width="1.6"/>
<rect x="678" y="761" width="13.5" height="2.4" fill="#d8d8d8" stroke="none"/>
<rect x="680" y="755" width="5.4" height="3" fill="#d8d8d8" stroke="none"/>
<rect x="690" y="755" width="6" height="3" fill="#d8d8d8" stroke="none"/>
<rect x="681.2" y="756" width="2.8" height="0.8" fill="#343434" stroke="none"/>
<rect x="691.4" y="756" width="3.2" height="0.8" fill="#343434" stroke="none"/>
<rect x="696" y="759.2" width="21.9" height="6.6" fill="#d8d8d8" stroke="none"/>
<rect x="697.6" y="762" width="2.2" height="0.9" fill="#343434" stroke="none"/>
<rect x="700.7" y="762" width="2.2" height="0.9" fill="#343434" stroke="none"/>
<rect x="703.8" y="762" width="2.2" height="0.9" fill="#343434" stroke="none"/>
<rect x="706.9" y="762" width="2.2" height="0.9" fill="#343434" stroke="none"/>
<rect x="710" y="762" width="2.2" height="0.9" fill="#343434" stroke="none"/>
<rect x="713.1" y="762" width="2.2" height="0.9" fill="#343434" stroke="none"/>
<rect x="712.6" y="761.4" width="1.8" height="3.2" fill="#343434" stroke="none"/>
<rect x="720" y="760" width="17" height="5" fill="#d8d8d8" stroke="none"/>
<rect x="721.5" y="762.6" width="2" height="1" fill="#343434" stroke="none"/>
<rect x="725" y="762.6" width="2.5" height="1" fill="#343434" stroke="none"/>
<rect x="729" y="761.2" width="2.6" height="2.6" fill="#343434" stroke="none"/>
<rect x="733.4" y="762.6" width="2.2" height="1" fill="#343434" stroke="none"/>
<rect x="740.8" y="760" width="17.2" height="5" fill="#d8d8d8" stroke="none"/>
<rect x="742.2" y="762.6" width="2.2" height="1" fill="#343434" stroke="none"/>
<rect x="746" y="762.6" width="2.4" height="1" fill="#343434" stroke="none"/>
<rect x="750" y="761.2" width="2.6" height="2.6" fill="#343434" stroke="none"/>
<rect x="754.6" y="761.2" width="0.8" height="2.6" fill="#343434" stroke="none"/>
<rect x="759.5" y="757.5" width="50" height="10"/>
<path d="M776.5 757.5V767.5M792.5 757.5V767.5"/>
<rect x="761" y="761" width="2" height="2.5" fill="#e8e8e8" stroke="none"/>
<rect x="764.6" y="761" width="2" height="2.5" fill="#e8e8e8" stroke="none"/>
<rect x="768.2" y="761" width="2" height="2.5" fill="#e8e8e8" stroke="none"/>
<rect x="771.8" y="761" width="2" height="2.5" fill="#e8e8e8" stroke="none"/>
<rect x="762" y="765" width="8" height="1" fill="#e8e8e8" stroke="none"/>
<rect x="778" y="761" width="2" height="2.5" fill="#e8e8e8" stroke="none"/>
<rect x="781.6" y="761" width="2" height="2.5" fill="#e8e8e8" stroke="none"/>
<rect x="785.2" y="761" width="2" height="2.5" fill="#e8e8e8" stroke="none"/>
<rect x="788.8" y="761" width="2" height="2.5" fill="#e8e8e8" stroke="none"/>
<rect x="779" y="765" width="8" height="1" fill="#e8e8e8" stroke="none"/>
<rect x="794" y="761" width="2" height="2.5" fill="#e8e8e8" stroke="none"/>
<rect x="797.6" y="761" width="2" height="2.5" fill="#e8e8e8" stroke="none"/>
<rect x="801.2" y="761" width="2" height="2.5" fill="#e8e8e8" stroke="none"/>
<rect x="804.8" y="761" width="2" height="2.5" fill="#e8e8e8" stroke="none"/>
<rect x="795" y="765" width="8" height="1" fill="#e8e8e8" stroke="none"/>
<rect x="810.5" y="754.5" width="35" height="12"/>
<rect x="813" y="757.5" width="1.8" height="1.8" fill="#e8e8e8" stroke="none"/>
<rect x="813" y="761.5" width="1.8" height="1.8" fill="#e8e8e8" stroke="none"/>
<rect x="816.1" y="757.5" width="1.8" height="1.8" fill="#e8e8e8" stroke="none"/>
<rect x="816.1" y="761.5" width="1.8" height="1.8" fill="#e8e8e8" stroke="none"/>
<rect x="819.2" y="757.5" width="1.8" height="1.8" fill="#e8e8e8" stroke="none"/>
<rect x="819.2" y="761.5" width="1.8" height="1.8" fill="#e8e8e8" stroke="none"/>
<rect x="822.3" y="757.5" width="1.8" height="1.8" fill="#e8e8e8" stroke="none"/>
<rect x="822.3" y="761.5" width="1.8" height="1.8" fill="#e8e8e8" stroke="none"/>
<rect x="825.4" y="757.5" width="1.8" height="1.8" fill="#e8e8e8" stroke="none"/>
<rect x="825.4" y="761.5" width="1.8" height="1.8" fill="#e8e8e8" stroke="none"/>
<rect x="828.5" y="757.5" width="1.8" height="1.8" fill="#e8e8e8" stroke="none"/>
<rect x="828.5" y="761.5" width="1.8" height="1.8" fill="#e8e8e8" stroke="none"/>
<rect x="831.6" y="757.5" width="1.8" height="1.8" fill="#e8e8e8" stroke="none"/>
<rect x="831.6" y="761.5" width="1.8" height="1.8" fill="#e8e8e8" stroke="none"/>
<rect x="834.7" y="757.5" width="1.8" height="1.8" fill="#e8e8e8" stroke="none"/>
<rect x="834.7" y="761.5" width="1.8" height="1.8" fill="#e8e8e8" stroke="none"/>
<rect x="837.8" y="757.5" width="1.8" height="1.8" fill="#e8e8e8" stroke="none"/>
<rect x="837.8" y="761.5" width="1.8" height="1.8" fill="#e8e8e8" stroke="none"/>
<rect x="840.9" y="757.5" width="1.8" height="1.8" fill="#e8e8e8" stroke="none"/>
<rect x="840.9" y="761.5" width="1.8" height="1.8" fill="#e8e8e8" stroke="none"/>
<rect x="813" y="766" width="14" height="1.5" fill="#e8e8e8" stroke="none"/>
<rect x="830" y="766" width="13" height="1.5" fill="#e8e8e8" stroke="none"/>
<rect x="848.5" y="755.5" width="22" height="10"/>
<rect x="851" y="757.5" width="2" height="1.8" fill="#e8e8e8" stroke="none"/>
<rect x="851" y="761.5" width="2" height="1.8" fill="#e8e8e8" stroke="none"/>
<rect x="854.8" y="757.5" width="2" height="1.8" fill="#e8e8e8" stroke="none"/>
<rect x="854.8" y="761.5" width="2" height="1.8" fill="#e8e8e8" stroke="none"/>
<rect x="858.6" y="757.5" width="2" height="1.8" fill="#e8e8e8" stroke="none"/>
<rect x="858.6" y="761.5" width="2" height="1.8" fill="#e8e8e8" stroke="none"/>
<rect x="862.4" y="757.5" width="2" height="1.8" fill="#e8e8e8" stroke="none"/>
<rect x="862.4" y="761.5" width="2" height="1.8" fill="#e8e8e8" stroke="none"/>
<rect x="866.2" y="757.5" width="2" height="1.8" fill="#e8e8e8" stroke="none"/>
<rect x="872.5" y="755.5" width="22" height="10"/>
<rect x="875" y="757.5" width="2" height="1.8" fill="#e8e8e8" stroke="none"/>
<rect x="875" y="761.5" width="2" height="1.8" fill="#e8e8e8" stroke="none"/>
<rect x="878.8" y="757.5" width="2" height="1.8" fill="#e8e8e8" stroke="none"/>
<rect x="878.8" y="761.5" width="2" height="1.8" fill="#e8e8e8" stroke="none"/>
<rect x="882.6" y="757.5" width="2" height="1.8" fill="#e8e8e8" stroke="none"/>
<rect x="882.6" y="761.5" width="2" height="1.8" fill="#e8e8e8" stroke="none"/>
<rect x="886.4" y="757.5" width="2" height="1.8" fill="#e8e8e8" stroke="none"/>
<rect x="886.4" y="761.5" width="2" height="1.8" fill="#e8e8e8" stroke="none"/>
<rect x="890.2" y="757.5" width="2" height="1.8" fill="#e8e8e8" stroke="none"/>
<rect x="895.5" y="757.5" width="16" height="10"/>
<rect x="897.5" y="761" width="2" height="2.5" fill="#e8e8e8" stroke="none"/>
<rect x="900.9" y="761" width="2" height="2.5" fill="#e8e8e8" stroke="none"/>
<rect x="904.3" y="761" width="2" height="2.5" fill="#e8e8e8" stroke="none"/>
<rect x="907.7" y="761" width="2" height="2.5" fill="#e8e8e8" stroke="none"/>
<rect x="898" y="765" width="10" height="1" fill="#e8e8e8" stroke="none"/>
<rect x="912.5" y="756.5" width="8" height="3"/>
<rect x="922.5" y="756.5" width="9" height="9"/>
<path d="M927 758L930 761L927 764L924 761Z" fill="#e8e8e8"/>
<rect x="933.5" y="756.5" width="20" height="8"/>
<path d="M937.5 756.5V764.5"/>
<path d="M941.5 756.5V764.5"/>
<path d="M945.5 756.5V764.5"/>
<path d="M949.5 756.5V764.5"/>
<path d="M933.5 760.5H949.5"/>
</g>
<g id="lines" class="l">
<path d="M320 171.5H340.5V201.5H320M340.5 185.5H440.5V361.5H503.5V388M488.5 361.5V369"/>
<path d="M320 261.5H340.5V246.5M488.5 395.5V405"/>
<path d="M330 311.5H338.5M330 341.5H338.5M320 371.5H338.5M320 401.5H338.5M338.5 311.5V401.5M338.5 355.5H360.5V430.5H529.5V442M491.5 430.5V442M504.5 430.5V442M515.5 430.5V442"/>
<path d="M330 436.5H342.5V496.5H320M330 466.5H524.5V474M488.5 466.5V474M510.5 466.5V474"/>
<path d="M506.5 263V350"/>
<path d="M783.5 261V435"/>
<path d="M320 562.5H645"/>
<path d="M330 590.5H660"/>
<path d="M320 625.5H669"/>
<path d="M320 655.5H664"/>
<path d="M330 685.5H672"/>
<path d="M321 711.5H661"/>
<path d="M321 738.5H661"/>
<path d="M460 805.5H767.5V765"/>
<path d="M470 835.5H785.5V766"/>
<path d="M460 865.5H802.5V767"/>
<path d="M1000 925.5H819.5V766"/>
<path d="M1000 895.5H836.5V766"/>
<path d="M1000 865.5H853.5V766"/>
<path d="M1000 835.5H868.5V766"/>
<path d="M1120 805.5H878.5V766"/>
<path d="M1120 775.5H886.5V765"/>
<path d="M1120 749.5H903.5V762"/>
<path d="M1110 720.5H935"/>
<path d="M1120 692.5H900"/>
<path d="M1120 665.5H951.5V680"/>
<path d="M1110 590.5H1100.5V620.5H1120M1100.5 605.5H1050.5V645.5H940"/>
<path d="M1120 530.5H1100.5V560.5H1120M1100.5 545.5H1030.5V615.5H940"/>
<path d="M1120 485.5H1010.5V595.5H944.5"/>
<path d="M1120 455.5H990.5V575.5H953.5"/>
<path d="M1120 425.5H970.5V543.5H946"/>
<path d="M1120 395.5H949"/>
<path d="M1109 359.5H895.5"/>
<path d="M1109 225.5H1100.5V315.5H1120M1100.5 255.5H1109M1100.5 285.5H1109M1100.5 269.5H880.5V300.5M856.5 312V300.5H907.5V312M873.5 300.5V312M890.5 300.5V312"/>
</g>
<path class="r" d="M330 231.5H340.5V246.5H400.5V395.5H503.5V407"/>
<defs><linearGradient id="hl" x1="0" y1="0" x2="1" y2="0"><stop offset="0" stop-color="#ab1e2a"/><stop offset="0.6" stop-color="#b8212e"/><stop offset="1" stop-color="#b3202c"/></linearGradient></defs>
<rect x="185" y="219.3" width="135" height="24.6" rx="7" fill="url(#hl)"/>
<g class="g">
<circle cx="325.5" cy="231.5" r="5.2"/>
<circle cx="325.5" cy="311.5" r="5.2"/>
<circle cx="325.5" cy="341.5" r="5.2"/>
<circle cx="325.5" cy="436.5" r="5.2"/>
<circle cx="325.5" cy="466.5" r="5.2"/>
<circle cx="325.5" cy="590.5" r="5.2"/>
<circle cx="325.5" cy="685.5" r="5.2"/>
<circle cx="465.5" cy="835.5" r="5.2"/>
<circle cx="783.5" cy="260.7" r="5.2"/>
<circle cx="1114.2" cy="225.5" r="5.2"/>
<circle cx="1114.2" cy="255.5" r="5.2"/>
<circle cx="1114.2" cy="285.5" r="5.2"/>
<circle cx="1114.2" cy="359.5" r="5.2"/>
<circle cx="1114.2" cy="590.5" r="5.2"/>
<circle cx="1114.2" cy="720.5" r="5.2"/>
</g>
<g id="labels">
<text x="232.51" y="176" font-size="18.5" text-anchor="start" fill="#fff" textLength="59.87" lengthAdjust="spacingAndGlyphs">U10G_1</text>
<text x="300.42" y="178.5" font-size="24" text-anchor="start" fill="#fff">**</text>
<text x="227.67" y="206" font-size="18.5" text-anchor="start" fill="#fff" textLength="64.66" lengthAdjust="spacingAndGlyphs">TBT4_C1</text>
<text x="300.42" y="208.5" font-size="24" text-anchor="start" fill="#fff">**</text>
<text x="257.45" y="236" font-size="18.5" text-anchor="start" fill="#1c0a0a" textLength="62.65" lengthAdjust="spacingAndGlyphs">U10G_2</text>
<text x="227.66" y="266" font-size="18.5" text-anchor="start" fill="#fff" textLength="66.88" lengthAdjust="spacingAndGlyphs">TBT4_C2</text>
<text x="300.42" y="268.5" font-size="24" text-anchor="start" fill="#fff">**</text>
<text x="257.5" y="316" font-size="18.5" text-anchor="start" fill="#fff" textLength="62.43" lengthAdjust="spacingAndGlyphs">U5G_E5</text>
<text x="257.5" y="346" font-size="18.5" text-anchor="start" fill="#fff" textLength="62.46" lengthAdjust="spacingAndGlyphs">U5G_E6</text>
<text x="257.49" y="376" font-size="18.5" text-anchor="start" fill="#fff" textLength="62.58" lengthAdjust="spacingAndGlyphs">U5G_E7</text>
<text x="257.5" y="406" font-size="18.5" text-anchor="start" fill="#fff" textLength="62.46" lengthAdjust="spacingAndGlyphs">U5G_E8</text>
<text x="232.46" y="441" font-size="18.5" text-anchor="start" fill="#fff" textLength="62.49" lengthAdjust="spacingAndGlyphs">U10G_5</text>
<text x="300.42" y="443.5" font-size="24" text-anchor="start" fill="#fff">**</text>
<text x="257.46" y="471" font-size="18.5" text-anchor="start" fill="#fff" textLength="62.52" lengthAdjust="spacingAndGlyphs">U10G_6</text>
<text x="246.22" y="501" font-size="18.5" text-anchor="start" fill="#fff" textLength="73.74" lengthAdjust="spacingAndGlyphs">U10G_C3</text>
<text x="271.62" y="567" font-size="18.5" text-anchor="start" fill="#fff" textLength="46.79" lengthAdjust="spacingAndGlyphs">M.2_1</text>
<text x="220.4" y="595" font-size="18.5" text-anchor="start" fill="#fff" textLength="100.63" lengthAdjust="spacingAndGlyphs">PCIEX16(G5)</text>
<text x="271.57" y="630" font-size="18.5" text-anchor="start" fill="#fff" textLength="48.56" lengthAdjust="spacingAndGlyphs">M.2_2</text>
<text x="271.57" y="660" font-size="18.5" text-anchor="start" fill="#fff" textLength="48.43" lengthAdjust="spacingAndGlyphs">M.2_3</text>
<text x="271.58" y="690" font-size="18.5" text-anchor="start" fill="#fff" textLength="48.18" lengthAdjust="spacingAndGlyphs">M.2_4</text>
<text x="230.41" y="716" font-size="18.5" text-anchor="start" fill="#fff" textLength="90.6" lengthAdjust="spacingAndGlyphs">PCIEX1(G4)</text>
<text x="220.4" y="743" font-size="18.5" text-anchor="start" fill="#fff" textLength="100.63" lengthAdjust="spacingAndGlyphs">PCIEX16(G4)</text>
<text x="375.48" y="810" font-size="18.5" text-anchor="start" fill="#fff" textLength="84.65" lengthAdjust="spacingAndGlyphs">CHA_FAN2</text>
<text x="375.48" y="840" font-size="18.5" text-anchor="start" fill="#fff" textLength="84.53" lengthAdjust="spacingAndGlyphs">CHA_FAN3</text>
<text x="375.48" y="870" font-size="18.5" text-anchor="start" fill="#fff" textLength="84.3" lengthAdjust="spacingAndGlyphs">CHA_FAN4</text>
<text x="1120.46" y="230" font-size="18.5" text-anchor="start" fill="#fff" textLength="72.82" lengthAdjust="spacingAndGlyphs">CPU_FAN</text>
<text x="1120.48" y="260" font-size="18.5" text-anchor="start" fill="#fff" textLength="72.37" lengthAdjust="spacingAndGlyphs">CPU_OPT</text>
<text x="1120.47" y="290" font-size="18.5" text-anchor="start" fill="#fff" textLength="86.15" lengthAdjust="spacingAndGlyphs">AIO_PUMP</text>
<text x="1120.46" y="320" font-size="18.5" text-anchor="start" fill="#fff" textLength="81.3" lengthAdjust="spacingAndGlyphs">CHA_FAN1</text>
<text x="1120.48" y="364" font-size="18.5" text-anchor="start" fill="#fff" textLength="67.07" lengthAdjust="spacingAndGlyphs">Memory</text>
<text x="1193.37" y="366.5" font-size="24" text-anchor="start" fill="#fff">**</text>
<text x="1120.74" y="400" font-size="18.5" text-anchor="start" fill="#fff" textLength="72.52" lengthAdjust="spacingAndGlyphs">U20G_C9</text>
<text x="1120.74" y="430" font-size="18.5" text-anchor="start" fill="#fff" textLength="72.73" lengthAdjust="spacingAndGlyphs">U10G_C4</text>
<text x="1120.77" y="460" font-size="18.5" text-anchor="start" fill="#fff" textLength="61.29" lengthAdjust="spacingAndGlyphs">U5G_E2</text>
<text x="1120.83" y="490" font-size="18.5" text-anchor="start" fill="#fff" textLength="58.41" lengthAdjust="spacingAndGlyphs">U5G_E1</text>
<text x="1120.32" y="535" font-size="18.5" text-anchor="start" fill="#fff" textLength="73.9" lengthAdjust="spacingAndGlyphs">SATA6G_1</text>
<text x="1120.3" y="565" font-size="18.5" text-anchor="start" fill="#fff" textLength="76.73" lengthAdjust="spacingAndGlyphs">SATA6G_2</text>
<text x="1120.3" y="595" font-size="18.5" text-anchor="start" fill="#fff" textLength="76.62" lengthAdjust="spacingAndGlyphs">SATA6G_3</text>
<text x="1120.3" y="625" font-size="18.5" text-anchor="start" fill="#fff" textLength="76.9" lengthAdjust="spacingAndGlyphs">SATA6G_4</text>
<text x="1120.27" y="670" font-size="18.5" text-anchor="start" fill="#fff" textLength="64.22" lengthAdjust="spacingAndGlyphs">SlimSAS</text>
<text x="1121.11" y="697" font-size="18.5" text-anchor="start" fill="#fff" textLength="47.09" lengthAdjust="spacingAndGlyphs">M.2_5</text>
<text x="1121.11" y="725" font-size="18.5" text-anchor="start" fill="#fff" textLength="47.12" lengthAdjust="spacingAndGlyphs">M.2_6</text>
<text x="1120.43" y="754" font-size="18.5" text-anchor="start" fill="#fff" textLength="81.62" lengthAdjust="spacingAndGlyphs">W_PUMP+</text>
<text x="1120.81" y="780" font-size="18.5" text-anchor="start" fill="#fff" textLength="59.14" lengthAdjust="spacingAndGlyphs">USB_E4</text>
<text x="1185.87" y="782.5" font-size="24" text-anchor="start" fill="#fff">**</text>
<text x="1120.81" y="810" font-size="18.5" text-anchor="start" fill="#fff" textLength="59.36" lengthAdjust="spacingAndGlyphs">USB_E3</text>
<text x="1185.87" y="812.5" font-size="24" text-anchor="start" fill="#fff">**</text>
<text x="1000.82" y="840" font-size="18.5" text-anchor="start" fill="#fff" textLength="58.7" lengthAdjust="spacingAndGlyphs">USB_E2</text>
<text x="1065.87" y="842.5" font-size="24" text-anchor="start" fill="#fff">**</text>
<text x="1000.85" y="870" font-size="18.5" text-anchor="start" fill="#fff" textLength="57.38" lengthAdjust="spacingAndGlyphs">USB_E1</text>
<text x="1065.87" y="872.5" font-size="24" text-anchor="start" fill="#fff">**</text>
<text x="1000.77" y="900" font-size="18.5" text-anchor="start" fill="#fff" textLength="61.46" lengthAdjust="spacingAndGlyphs">U5G_E4</text>
<text x="1000.77" y="930" font-size="18.5" text-anchor="start" fill="#fff" textLength="61.17" lengthAdjust="spacingAndGlyphs">U5G_E3</text>
<text x="463.83" y="254.5" font-size="18.5" text-anchor="start" fill="#fff" textLength="45.82" lengthAdjust="spacingAndGlyphs">HDMI</text>
<text x="515.87" y="257" font-size="24" text-anchor="start" fill="#fff">*</text>
<text x="530.87" y="257" font-size="24" text-anchor="start" fill="#fff">**</text>
<text x="753.91" y="247" font-size="18.5" text-anchor="start" fill="#fff" textLength="33.56" lengthAdjust="spacingAndGlyphs">CPU</text>
<text x="793.37" y="249.5" font-size="24" text-anchor="start" fill="#fff">**</text>
</g>
</svg>
</body></html>
